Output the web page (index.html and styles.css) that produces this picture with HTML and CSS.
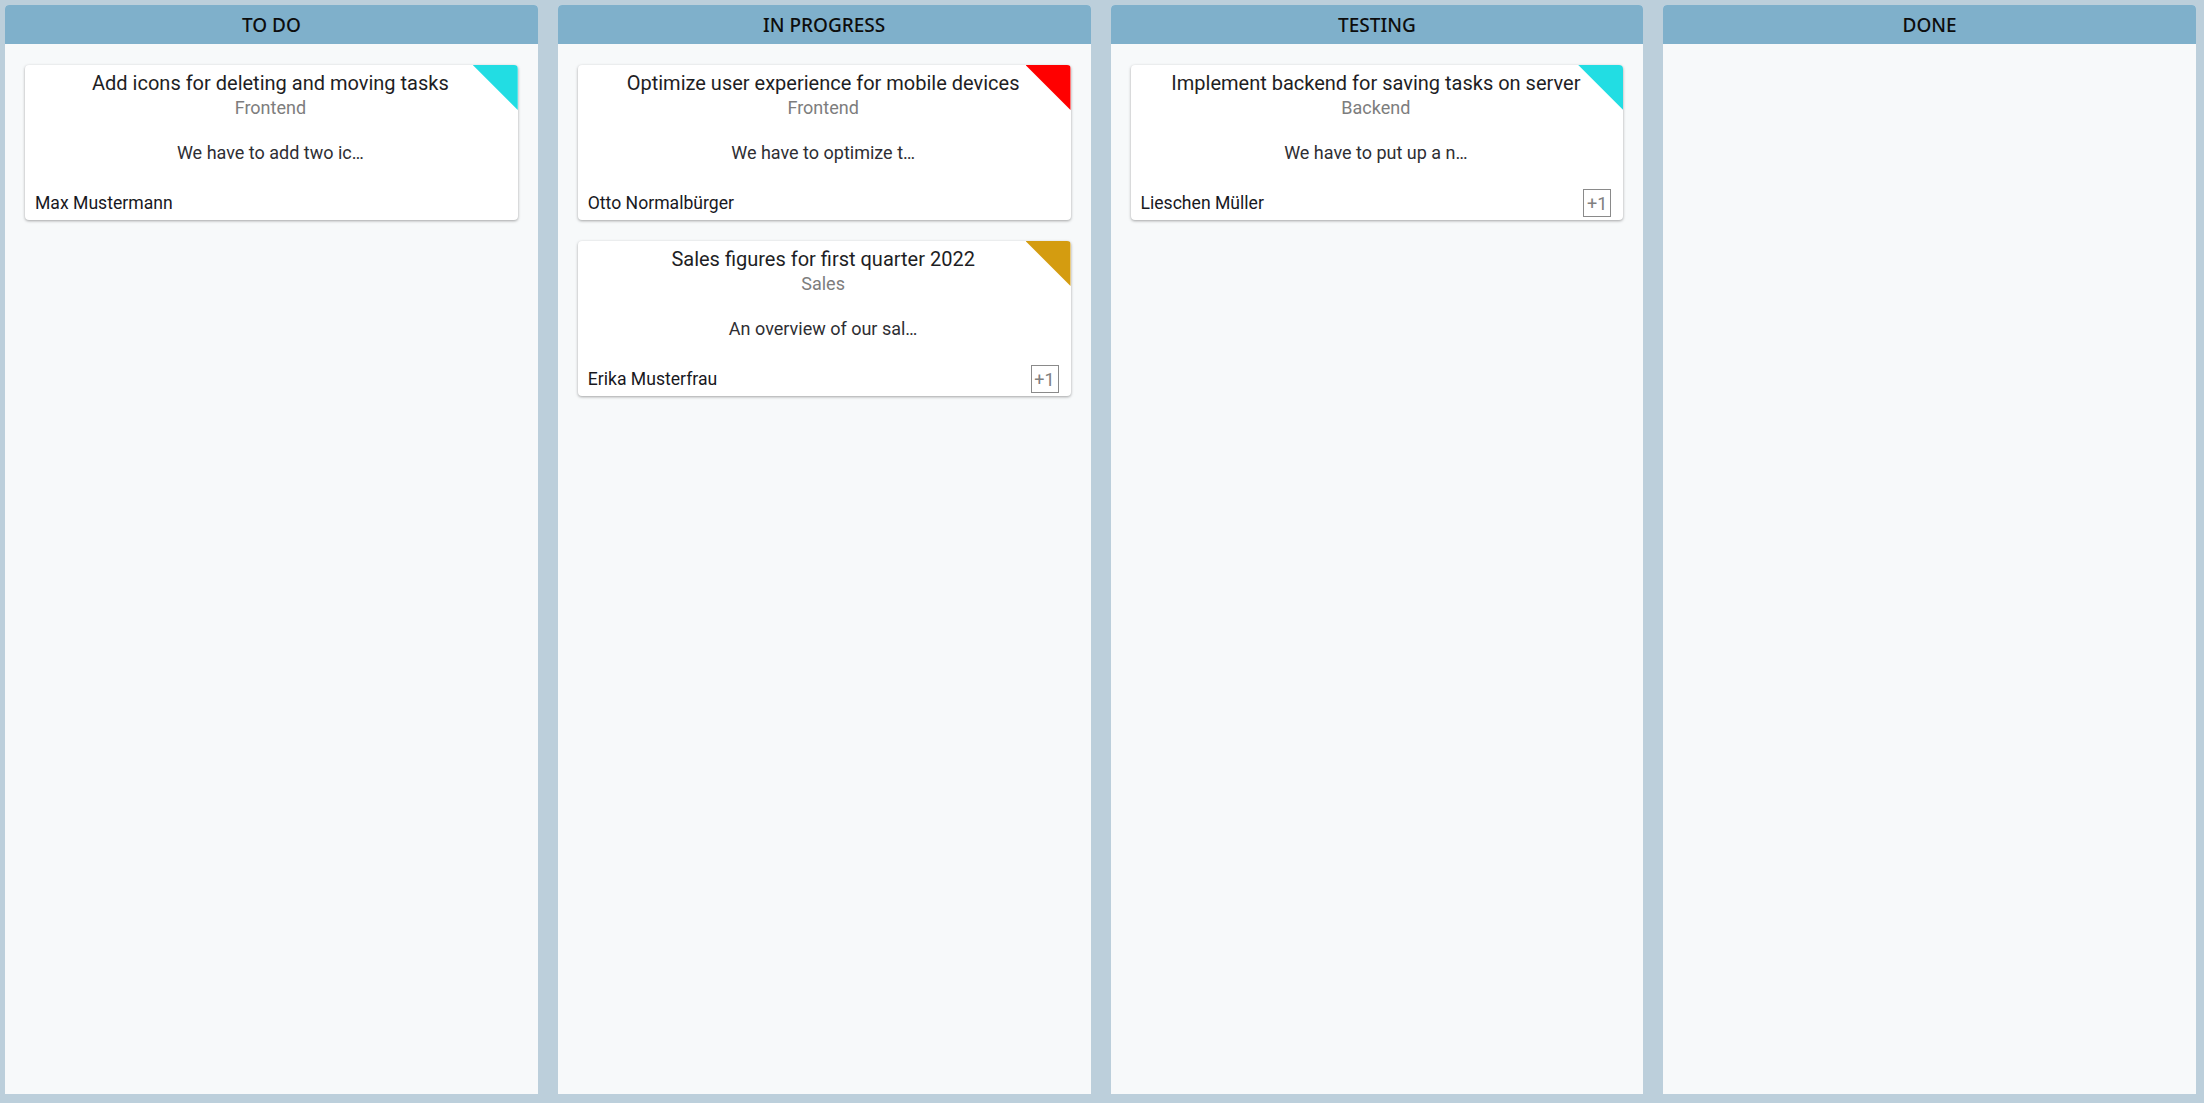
FILE: index.html
```html
<!DOCTYPE html>
<html lang="en">
<head>
<meta charset="utf-8">
<title>Board</title>
<link rel="stylesheet" href="styles.css">
</head>
<body>
<div class="board">
  <section class="column">
    <header class="column-head">TO DO</header>
    <div class="column-body">
      <article class="card">
        <span class="corner corner-cyan"></span>
        <h2 class="card-title">Add icons for deleting and moving tasks</h2>
        <div class="card-cat">Frontend</div>
        <p class="card-desc">We have to add two ic…</p>
        <div class="card-foot"><span class="card-name">Max Mustermann</span></div>
      </article>
    </div>
  </section>
  <section class="column">
    <header class="column-head">IN PROGRESS</header>
    <div class="column-body">
      <article class="card">
        <span class="corner corner-red"></span>
        <h2 class="card-title">Optimize user experience for mobile devices</h2>
        <div class="card-cat">Frontend</div>
        <p class="card-desc">We have to optimize t…</p>
        <div class="card-foot"><span class="card-name">Otto Normalbürger</span></div>
      </article>
      <article class="card">
        <span class="corner corner-gold"></span>
        <h2 class="card-title">Sales figures for first quarter 2022</h2>
        <div class="card-cat">Sales</div>
        <p class="card-desc">An overview of our sal…</p>
        <div class="card-foot"><span class="card-name">Erika Musterfrau</span><span class="badge">+1</span></div>
      </article>
    </div>
  </section>
  <section class="column">
    <header class="column-head">TESTING</header>
    <div class="column-body">
      <article class="card">
        <span class="corner corner-cyan"></span>
        <h2 class="card-title">Implement backend for saving tasks on server</h2>
        <div class="card-cat">Backend</div>
        <p class="card-desc">We have to put up a n…</p>
        <div class="card-foot"><span class="card-name">Lieschen Müller</span><span class="badge">+1</span></div>
      </article>
    </div>
  </section>
  <section class="column">
    <header class="column-head">DONE</header>
    <div class="column-body"></div>
  </section>
</div>
</body>
</html>
```
FILE: styles.css
```css
html, body {
  margin: 0;
  padding: 0;
  height: 100%;
}
body {
  background: #bccfdb;
  font-family: Roboto, "Liberation Sans", sans-serif;
  overflow: hidden;
}
.board {
  display: flex;
  gap: 20px;
  padding: 5px 8px 9px 5px;
  height: 1103px;
  box-sizing: border-box;
}
.column {
  flex: 1 1 0;
  min-width: 0;
  display: flex;
  flex-direction: column;
  background: #f7f9fa;
  border-radius: 4px 4px 0 0;
}
.column-head {
  height: 39px;
  background: #7fb0cb;
  border-radius: 4px 4px 0 0;
  display: flex;
  align-items: center;
  justify-content: center;
  font-family: "Noto Sans", "Open Sans", sans-serif;
  font-size: 19px;
  font-weight: 500;
  color: #0d0d0d;
}
.column-body {
  flex: 1;
  padding: 21px 20px;
  display: flex;
  flex-direction: column;
  gap: 21px;
}
.card {
  position: relative;
  background: #fff;
  border-radius: 4px;
  box-shadow: 0 1px 3px rgba(0, 0, 0, 0.35);
  padding: 6px 12px 3px 10px;
  overflow: hidden;
  text-align: center;
}
.corner {
  position: absolute;
  top: 0;
  right: 0;
  width: 45px;
  height: 45px;
  clip-path: polygon(0 0, 100% 0, 100% 100%);
}
.corner-cyan { background: #22dde3; }
.corner-red { background: #ff0000; }
.corner-gold { background: #d49c10; }
.card-title {
  position: relative;
  margin: 0;
  font-size: 20px;
  line-height: 24px;
  font-weight: 400;
  color: #1e1e24;
  white-space: nowrap;
}
.card-cat {
  position: relative;
  margin-top: 2px;
  font-size: 18px;
  line-height: 22px;
  color: #7d7d7d;
}
.card-desc {
  margin: 23px 0 0;
  font-size: 18px;
  line-height: 22px;
  color: #2e2e33;
}
.card-foot {
  margin-top: 25px;
  height: 28px;
  display: flex;
  align-items: center;
  justify-content: space-between;
}
.card-name {
  font-size: 17.6px;
  line-height: 22px;
  color: #18181e;
}
.badge {
  box-sizing: border-box;
  width: 28px;
  height: 28px;
  border: 1px solid #8a8a8a;
  display: flex;
  align-items: center;
  justify-content: center;
  font-size: 18px;
  color: #808080;
}
```
